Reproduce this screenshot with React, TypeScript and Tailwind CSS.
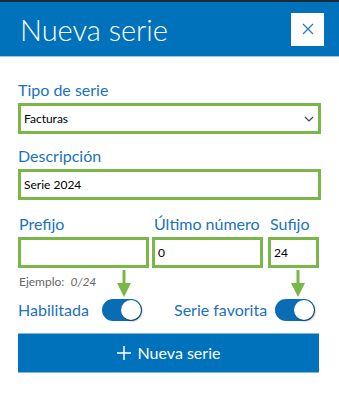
import { useState } from 'react';

function Toggle({ on, onClick }: { on: boolean; onClick: () => void }) {
  return (
    <button
      onClick={onClick}
      className={`relative h-[22px] w-[40px] rounded-full ${on ? 'bg-[#0a6cb4]' : 'bg-gray-300'}`}
    >
      <span
        className={`absolute top-[1px] h-[20px] w-[20px] rounded-full bg-white shadow-[1px_1px_2px_rgba(0,0,0,0.5)] ${on ? 'left-[19px]' : 'left-[1px]'}`}
      />
    </button>
  );
}

function Arrow() {
  return (
    <svg width="16" height="27" viewBox="0 0 16 27">
      <path d="M8 0v14" stroke="#7ab648" strokeWidth="3" />
      <path d="M1 13h14L8 27z" fill="#7ab648" />
    </svg>
  );
}

export default function App() {
  const [enabled, setEnabled] = useState(true);
  const [favorite, setFavorite] = useState(true);
  const [descripcion, setDescripcion] = useState('Serie 2024');
  const [prefijo, setPrefijo] = useState('');
  const [numero, setNumero] = useState('0');
  const [sufijo, setSufijo] = useState('24');

  const label = 'whitespace-nowrap text-[16px] leading-[20px] text-[#1a72c0]';
  const box = 'h-[31px] border-[3px] border-[#7ab648] bg-white px-[3px] text-[12px] text-black outline-none';

  return (
    <div className="h-[393px] w-[339px] overflow-hidden bg-white font-['Lato',sans-serif]">
      {/* Cabecera */}
      <div className="border-t-2 border-[#1d2b36]">
        <div className="flex h-[54px] items-center justify-between bg-[#0072bb] pl-[20px] pr-[15px]">
          <h1 className="text-[29px] font-light leading-none text-white">Nueva serie</h1>
          <button className="flex h-[33px] w-[33px] items-center justify-center bg-white">
            <svg width="12" height="12" viewBox="0 0 12 12">
              <path d="M1 1l10 10M11 1L1 11" stroke="#2a78c8" strokeWidth="1.3" />
            </svg>
          </button>
        </div>
        <div className="h-[1px] bg-[#9cc6e6]" />
      </div>

      <div className="flex flex-col px-[18px] pt-[23px]">
        <label className={label}>Tipo de serie</label>
        <div className={`${box} mt-[3px] flex items-center justify-between`}>
          <span>Facturas</span>
          <svg width="10" height="6" viewBox="0 0 10 6" className="mr-[1px]">
            <path d="M1 1l4 4 4-4" stroke="#444" strokeWidth="1.2" fill="none" />
          </svg>
        </div>

        <label className={`${label} mt-[12px]`}>Descripción</label>
        <input
          className={`${box} mt-[3px] w-full`}
          value={descripcion}
          onChange={(e) => setDescripcion(e.target.value)}
        />

        <div className="mt-[14px] flex gap-[3px]">
          <div className="flex w-[131px] flex-col">
            <label className={`${label} pl-[1px]`}>Prefijo</label>
            <input className={`${box} mt-[3px] w-full`} value={prefijo} onChange={(e) => setPrefijo(e.target.value)} />
          </div>
          <div className="flex w-[111px] flex-col">
            <label className={`${label} pl-[2px]`}>Último número</label>
            <input className={`${box} mt-[3px] w-full`} value={numero} onChange={(e) => setNumero(e.target.value)} />
          </div>
          <div className="ml-[2px] flex w-[51px] flex-col">
            <label className={`${label} pl-[2px]`}>Sufijo</label>
            <input className={`${box} mt-[3px] w-full`} value={sufijo} onChange={(e) => setSufijo(e.target.value)} />
          </div>
        </div>

        <div className="flex h-[30px] items-start">
          <p className="mt-[5px] w-[98px] whitespace-nowrap pl-[1px] text-[12px] text-[#666]">
            Ejemplo: <span className="ml-[3px] italic">0/24</span>
          </p>
          <div className="mt-[2px]"><Arrow /></div>
          <div className="ml-[158px] mt-[2px]"><Arrow /></div>
        </div>

        <div className="flex h-[24px] items-center">
          <span className="w-[84px] whitespace-nowrap text-[16px] text-[#1a72c0]">Habilitada</span>
          <Toggle on={enabled} onClick={() => setEnabled(!enabled)} />
          <span className="ml-[32px] w-[101px] whitespace-nowrap text-[16px] text-[#1a72c0]">Serie favorita</span>
          <Toggle on={favorite} onClick={() => setFavorite(!favorite)} />
        </div>

        <button className="mt-[11px] flex h-[40px] w-[301px] items-center justify-center gap-[7px] border-y border-[#7fb6e2] bg-[#0072bb] text-[16px] text-white">
          <svg width="14" height="14" viewBox="0 0 14 14">
            <path d="M7 0v14M0 7h14" stroke="white" strokeWidth="1.5" />
          </svg>
          Nueva serie
        </button>
      </div>
    </div>
  );
}
